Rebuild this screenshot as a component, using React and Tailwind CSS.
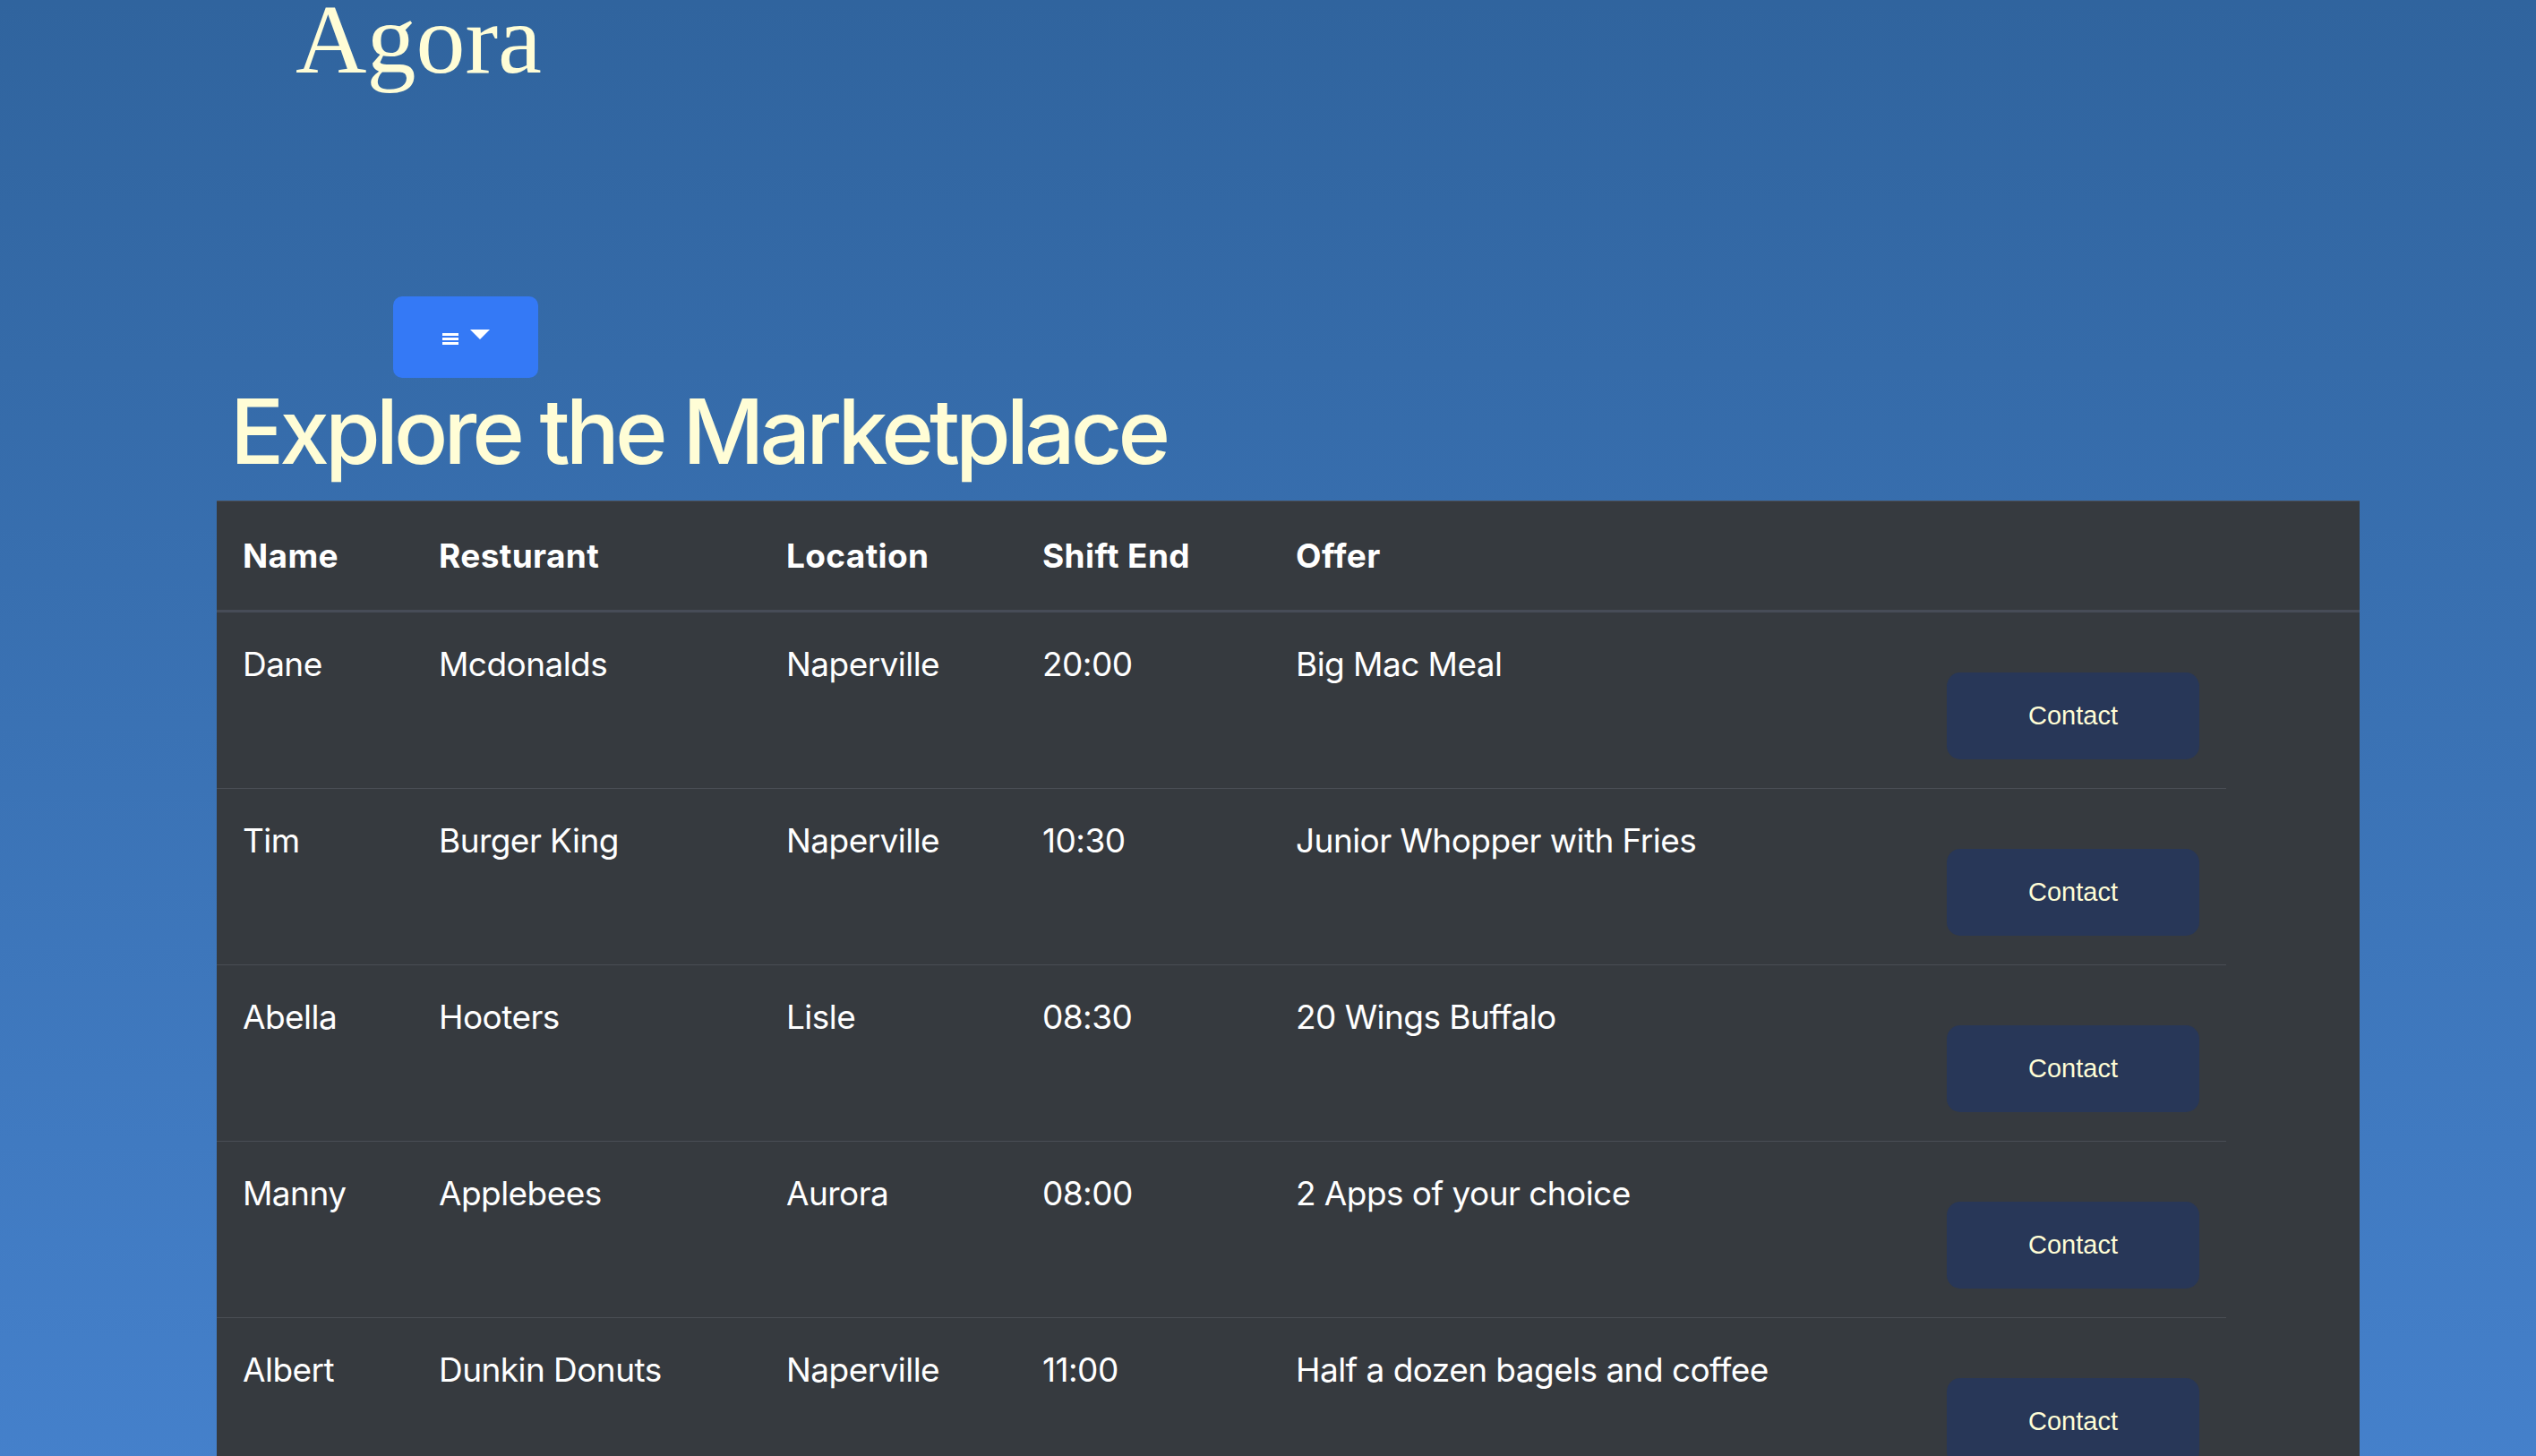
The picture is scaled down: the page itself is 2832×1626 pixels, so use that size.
import React from "react";

const rows = [
  { name: "Dane", rest: "Mcdonalds", loc: "Naperville", end: "20:00", offer: "Big Mac Meal" },
  { name: "Tim", rest: "Burger King", loc: "Naperville", end: "10:30", offer: "Junior Whopper with Fries" },
  { name: "Abella", rest: "Hooters", loc: "Lisle", end: "08:30", offer: "20 Wings Buffalo" },
  { name: "Manny", rest: "Applebees", loc: "Aurora", end: "08:00", offer: "2 Apps of your choice" },
  { name: "Albert", rest: "Dunkin Donuts", loc: "Naperville", end: "11:00", offer: "Half a dozen bagels and coffee" },
];

const cols = "grid grid-cols-[219px_388px_286px_283px_727px_341px]";

export default function App() {
  return (
    <div className="min-h-screen w-full bg-gradient-to-b from-[#30649e] to-[#4581cc] flex flex-col overflow-hidden" style={{ fontFamily: "Inter, 'Noto Sans', sans-serif" }}>
      <div className="pl-[330px] h-[88px] text-[110px] leading-[88px] text-[#fffdd6]" style={{ fontFamily: "'Liberation Serif', 'DejaVu Serif', serif" }}>
        Agora
      </div>
      <div className="pl-[439px] mt-[243px]">
        <button className="w-[162px] h-[91px] rounded-[10px] bg-[#3479f6] flex items-center justify-center gap-[13px]">
          <span className="flex flex-col gap-[2px] translate-y-[2px]">
            <span className="block w-[18px] h-[3px] bg-white"></span>
            <span className="block w-[18px] h-[3px] bg-white"></span>
            <span className="block w-[18px] h-[3px] bg-white"></span>
          </span>
          <svg width="22" height="11" viewBox="0 0 22 11" className="-translate-y-[3px]">
            <polygon points="0,0 22,0 11,11" fill="white" />
          </svg>
        </button>
      </div>
      <h1 className="pl-[257px] text-[100px] leading-[120px] font-medium tracking-[-0.05em] text-[#fffdd6]">
        Explore the Marketplace
      </h1>
      <div className="ml-[242px] mt-[17px] w-[2393px] bg-[#363a3f] border-t border-[#4a4f57]">
        <div className={`${cols} w-[2393px] border-b-[3px] border-[#474c57] text-white font-bold text-[37px] leading-[55px] tracking-[0.01em]`}>
          <div className="px-[29px] py-[33px]">Name</div>
          <div className="px-[29px] py-[33px]">Resturant</div>
          <div className="px-[29px] py-[33px]">Location</div>
          <div className="px-[29px] py-[33px]">Shift End</div>
          <div className="px-[29px] py-[33px]">Offer</div>
          <div></div>
        </div>
        {rows.map((r) => (
          <div key={r.name} className={`${cols} w-[2244px] border-b border-[#4a4e55] text-white text-[37px] leading-[55px] tracking-[-0.015em]`}>
            <div className="px-[29px] pt-[30px]">{r.name}</div>
            <div className="px-[29px] pt-[30px]">{r.rest}</div>
            <div className="px-[29px] pt-[30px]">{r.loc}</div>
            <div className="px-[29px] pt-[30px]">{r.end}</div>
            <div className="px-[29px] pt-[30px]">{r.offer}</div>
            <div className="px-[29px] pt-[67px] pb-[32px]">
              <button className="w-[282px] h-[97px] rounded-[15px] bg-[#283758] text-[#fffdd6] text-[29px] tracking-normal" style={{ fontFamily: "'Liberation Sans', Arial, sans-serif" }}>
                Contact
              </button>
            </div>
          </div>
        ))}
      </div>
    </div>
  );
}
